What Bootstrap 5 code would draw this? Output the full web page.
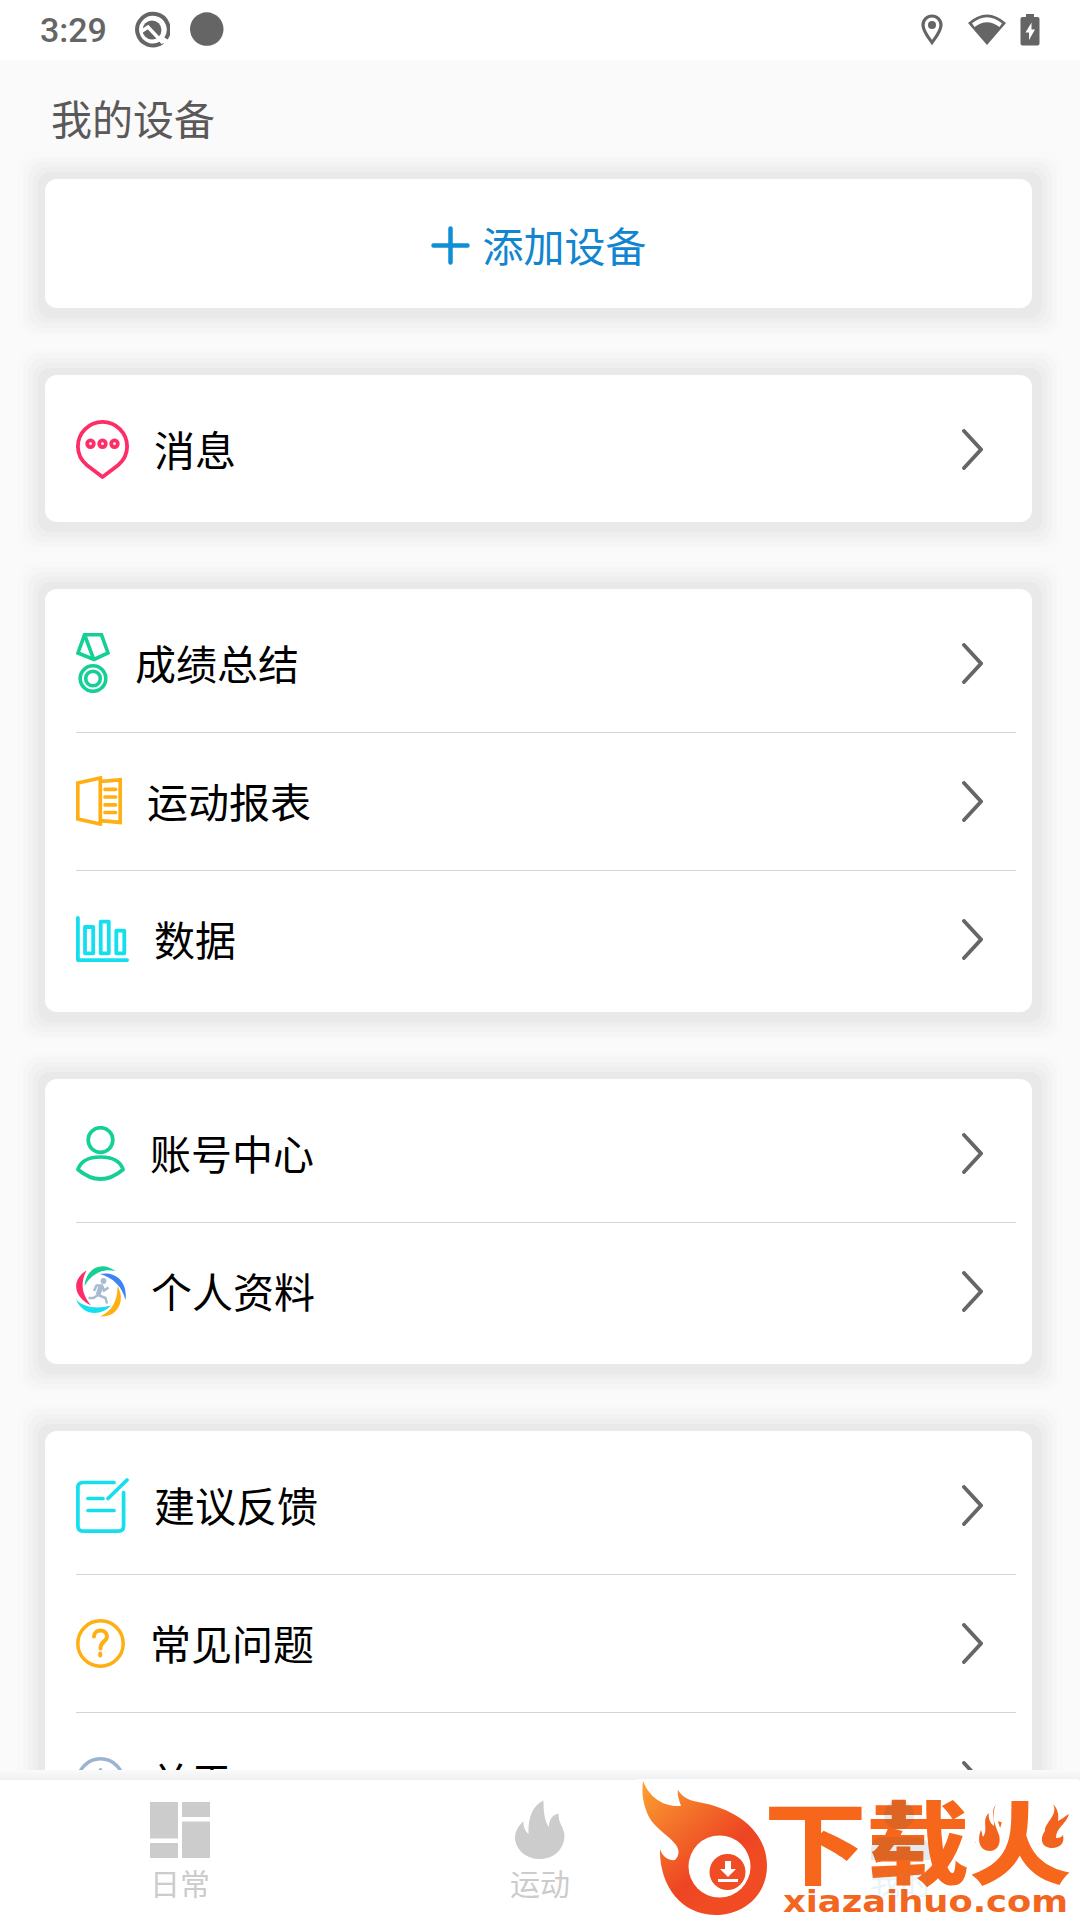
<!DOCTYPE html>
<html lang="zh-CN">
<head>
  <meta charset="UTF-8" />
  <meta name="viewport" content="width=device-width, initial-scale=1.0" />
  <title>我的</title>
  <link href="https://cdn.jsdelivr.net/npm/bootstrap@5.3.0/dist/css/bootstrap.min.css" rel="stylesheet" />
  <style>
    body {
      height: 1920px;
      overflow: hidden;
      background: #fafafa;
      font-family: "Noto Sans CJK SC", sans-serif;
      color: #000;
    }
    svg {
      display: block;
      flex: none;
      fill: none;
    }
    .status-bar {
      height: 60px;
      padding: 0 40px;
      color: #656565;
    }
    .status-bar .wifi {
      margin: 0 14px 0 25px;
    }
    .clock {
      font: 500 34px/60px Roboto, sans-serif;
      width: 94px;
    }
    .page-title {
      height: 119px;
      padding-left: 51px;
      font-size: 41px;
      line-height: 115px;
      color: #5a5858;
    }
    .scroll-area {
      height: 1710px;
      overflow: hidden;
      isolation: isolate;
    }
    .panel {
      position: relative;
      margin: 0 48px 67px 45px;
      padding: 6px 0 4px;
      border-radius: 12px;
      background: #fff;
    }
    /* stepped halo round each panel */
    .panel::before {
      content: "";
      position: absolute;
      inset: 0;
      z-index: -1;
      border-radius: 5px;
      background: #e9e9e9;
      box-shadow:
        1.5px 1.5px 0 8.5px #e9e9e9,
        1.5px 1.5px 0 13.5px #eee,
        1.5px 1.5px 0 18.5px #f2f2f2,
        1.5px 1.5px 0 23.5px #f6f6f6,
        1.5px 1.5px 0 28.5px #f9f9f9;
    }
    .add-device {
      height: 119px;
      gap: 13px;
      font-size: 41px;
      line-height: 60px;
      color: #1285d1;
    }
    .add-device svg {
      margin-top: 2px;
    }
    .add-device span {
      padding-bottom: 2px;
    }
    .menu-row {
      height: 137px;
      margin: 0 16px 0 31px;
      padding-right: 33px;
      font-size: 41px;
      line-height: 60px;
    }
    .menu-row + .menu-row {
      height: 138px;
      border-top: 1px solid #d4d4d4;
    }
    .menu-row span {
      margin-left: 25px;
      padding-bottom: 4px;
    }
    .lifted { margin-bottom: 2px; }
    .pink { stroke: #ff2d67; }
    .green { stroke: #14cf96; }
    .amber { stroke: #ffaf14; }
    .cyan { stroke: #15dfef; }
    .steel { stroke: #9db4d0; }
    .bar-shade {
      height: 10px;
      background: linear-gradient(#fafafa, #f0f0f0);
    }
    .tab-bar {
      height: 140px;
      background: #fff;
      color: #ccc;
      font-size: 30px;
      line-height: 36px;
    }
    .tab-item {
      width: 360px;
    }
    .tab-icon {
      height: 68px;
      margin: 11px 0 5px;
    }
    .brand-mark {
      right: 0;
      bottom: 0;
    }
    .brand-name {
      font: 900 88px "Noto Sans CJK SC", sans-serif;
      fill: #f6661b;
    }
    .brand-url {
      font: bold 31px "DejaVu Sans", sans-serif;
      fill: #f3661f;
    }
    .ghost-label {
      font: 30px "Noto Sans CJK SC", sans-serif;
      fill: #3fa0c8;
    }
  </style>
</head>
<body>
  <header class="status-bar bg-white d-flex align-items-center">
    <div class="clock">3:29</div>
    <svg width="36" height="38" viewBox="0 0 36 38">
      <path d="M28.500 31.200A15.800 15.800 0 1 1 32 27.500" stroke="#656565" stroke-width="4"/>
      <circle cx="18" cy="19" r="9.500" fill="#656565"/>
      <path d="M8 20L14 16L29 32" stroke="#fff" stroke-width="3.400"/>
    </svg>
    <svg class="ms-3 ps-1" width="42" height="40" viewBox="-1.500 0 42 40">
      <circle cx="17.500" cy="20" r="18" fill="#ddd"/>
      <circle cx="17" cy="19" r="18.500" fill="#656565"/>
    </svg>
    <svg class="ms-auto" width="22" height="32" viewBox="0 0 22 32">
      <path d="M11 2C6 2 2 6 2 11C2 17 7 23 11 28.500C15 23 20 17 20 11C20 6 16 2 11 2Z" stroke="#656565" stroke-width="3.200"/>
      <circle cx="11" cy="11" r="4" fill="#656565"/>
    </svg>
    <svg class="wifi" width="38" height="32" viewBox="0 0 38 32">
      <path d="M0 9Q19-8 38 9L19 31Z" fill="#656565"/>
      <path d="M4 9.300Q19-3 34 9.300L31.500 13Q19 3.500 6.500 13Z" fill="#fff"/>
    </svg>
    <svg width="20" height="32" viewBox="0 0 20 32">
      <path d="M6 0H14V3H17.500Q19.500 3 19.500 5V29.500Q19.500 31.500 17.500 31.500H2.500Q.5 31.500 .5 29.500V5Q.5 3 2.500 3H6Z" fill="#656565"/>
      <path d="M11.500 8.500V15.500H15L9 26V18.500H5.500Z" fill="#fff"/>
    </svg>
  </header>

  <main class="scroll-area">
    <h1 class="page-title fw-normal m-0">我的设备</h1>

    <section class="panel">
      <div class="add-device d-flex align-items-center justify-content-center">
        <svg width="39" height="39" viewBox="0 0 39 39" stroke="#0f8fd5" stroke-width="4.500" stroke-linecap="round"><path d="M2.500 19.500H36.500M19.500 2.500V36.500"/></svg>
        <span>添加设备</span>
      </div>
    </section>

    <section class="panel">
      <div class="menu-row d-flex align-items-center">
        <svg class="pink" width="53" height="59" viewBox="0 0 53 59" stroke-width="3.800" stroke-linejoin="round">
          <path d="M26.500 1.900A24.600 24.600 0 0 0 1.900 26.500C1.900 36 6 41 11 45.200L26.500 57L42 45.200C47 41 51.100 36 51.100 26.500A24.600 24.600 0 0 0 26.500 1.900Z"/>
          <circle cx="14.500" cy="23.700" r="3.300"/><circle cx="26.500" cy="23.700" r="3.300"/><circle cx="38.500" cy="23.700" r="3.300"/>
        </svg>
        <span>消息</span>
        <svg class="ms-auto" width="21" height="41" viewBox="0 0 21 41"><use href="#chevron"/></svg>
      </div>
    </section>

    <section class="panel">
      <div class="menu-row d-flex align-items-center">
        <svg class="green lifted" width="34" height="60" viewBox="0 0 34 60" stroke-width="3.600">
          <path d="M8.500 1.800H25.500L32 20L18 26.500L2 20ZM8.500 1.700L18 27"/>
          <circle cx="17" cy="45.500" r="12.800"/><circle cx="17" cy="45.500" r="7.300"/>
        </svg>
        <span>成绩总结</span>
        <svg class="ms-auto" width="21" height="41" viewBox="0 0 21 41"><use href="#chevron"/></svg>
      </div>
      <div class="menu-row d-flex align-items-center">
        <svg class="amber lifted" width="46" height="50" viewBox="0 0 46 50" stroke-width="3.700">
          <path d="M1.800 7L24.300 2V48L1.800 43ZM24.300 5.500L44.200 3.800V46.400L24.300 44.700"/>
          <path d="M29 13.300H39.500M29 21H39.500M29 28.800H39.500M29 36.500H39.500" stroke-linecap="round"/>
        </svg>
        <span>运动报表</span>
        <svg class="ms-auto" width="21" height="41" viewBox="0 0 21 41"><use href="#chevron"/></svg>
      </div>
      <div class="menu-row d-flex align-items-center">
        <svg class="cyan lifted" width="53" height="46" viewBox="0 0 53 46" stroke-width="3.800" stroke-linejoin="round" stroke-linecap="round">
          <path d="M1.900 1.900V44.100H51.100M9 11H17.200V37.300H9ZM24.700 5.700H32.800V37.300H24.700ZM40.300 14.700H48.300V37.300H40.300Z"/>
        </svg>
        <span>数据</span>
        <svg class="ms-auto" width="21" height="41" viewBox="0 0 21 41"><use href="#chevron"/></svg>
      </div>
    </section>

    <section class="panel">
      <div class="menu-row d-flex align-items-center">
        <svg class="green" width="49" height="55" viewBox="0 0 49 55" stroke-width="3.700" stroke-linejoin="round">
          <circle cx="24.500" cy="14" r="12.300"/>
          <path d="M1.900 43.500C5 34.500 14 31 24.500 31S44 34.500 47.100 43.500C32 56.200 17 56.200 1.900 43.500Z"/>
        </svg>
        <span>账号中心</span>
        <svg class="ms-auto" width="21" height="41" viewBox="0 0 21 41"><use href="#chevron"/></svg>
      </div>
      <div class="menu-row d-flex align-items-center">
        <svg width="50" height="51" viewBox="0 0 50 51">
          <path d="M8.500 20C10 3 25-6 39.500 5C28 2.500 17 6 8.500 20Z" fill="#14cf96"/>
          <path d="M24 8C38 5 52 14 49.500 34C46 21 38 12 24 8Z" fill="#3f82f7"/>
          <path d="M41.500 20C50 34 42 52 24 50.500C35.500 45 41.500 36 41.500 20Z" fill="#ffaf14"/>
          <path d="M0 33.500C7 41 20 43.500 35 39.500C25 50.500 7 50 0 33.500Z" fill="#15dfef"/>
          <path d="M10.500 4.500C-4 13-4 30 15 39.500C6.500 29 3.500 18 10.500 4.500Z" fill="#ff2d67"/>
          <circle cx="27.500" cy="15" r="2.900" fill="#a9bbd2"/>
          <path d="M25 20L22 29" stroke="#a9bbd2" stroke-width="5"/>
          <path d="M18 25L20.500 19.500H26L28 24.500L32.500 21.500M22 29L17.500 32H12.500M22 29L29.500 32L31 37.500" stroke="#a9bbd2" stroke-width="2.500"/>
        </svg>
        <span>个人资料</span>
        <svg class="ms-auto" width="21" height="41" viewBox="0 0 21 41"><use href="#chevron"/></svg>
      </div>
    </section>

    <section class="panel">
      <div class="menu-row d-flex align-items-center">
        <svg class="cyan" width="53" height="55" viewBox="0 0 53 55" stroke-width="3.700" stroke-linecap="round">
          <path d="M38 4.500H7Q1.900 4.500 1.900 9.500V48Q1.900 53.100 7 53.100H42.500Q47.600 53.100 47.600 48V14.500M12 20.500H27M12 32.500H38M32 20.500L51 2"/>
        </svg>
        <span>建议反馈</span>
        <svg class="ms-auto" width="21" height="41" viewBox="0 0 21 41"><use href="#chevron"/></svg>
      </div>
      <div class="menu-row d-flex align-items-center">
        <svg class="amber" width="49" height="49" viewBox="0 0 49 49" stroke-width="3.500">
          <circle cx="24.500" cy="24.500" r="22.700"/>
          <path d="M18 17.500C18 9.500 31 9.500 31 17.500C31 22.500 24.500 22 24.500 29.500M24.200 34.500V36.500" stroke-width="4" stroke-linecap="round"/>
        </svg>
        <span>常见问题</span>
        <svg class="ms-auto" width="21" height="41" viewBox="0 0 21 41"><use href="#chevron"/></svg>
      </div>
      <div class="menu-row d-flex align-items-center">
        <svg class="steel" width="49" height="49" viewBox="0 0 49 49" stroke-width="3.500">
          <circle cx="24.500" cy="24.500" r="22.700"/>
          <path d="M24.500 12.800V13.500M24.500 20V36" stroke-linecap="round"/>
        </svg>
        <span>关于</span>
        <svg class="ms-auto" width="21" height="41" viewBox="0 0 21 41"><use href="#chevron"/></svg>
      </div>
    </section>
  </main>

  <div class="bar-shade"></div>
  <nav class="tab-bar d-flex text-center position-relative">
    <div class="tab-item d-flex flex-column align-items-center">
      <div class="tab-icon">
        <svg width="60" height="68" viewBox="0 0 60 68"><path fill="#ccc" d="M0 11H28V47.500H0ZM0 52H28V67H0ZM32 11H60V26H32ZM32 30.500H60V67H32Z"/></svg>
      </div>
      日常
    </div>
    <div class="tab-item d-flex flex-column align-items-center">
      <div class="tab-icon">
        <svg width="50" height="68" viewBox="0 0 50 68"><path fill="#ccc" d="M28.500 9.500C17 15 13 27 13.500 43C10 40 8 35 8.500 30C3 35 0 41 0 47C1 60 12 68 25 68C38 68 49 59 49.500 45C49.500 37 43 32 43.500 22.500C37 24 34 29 34 36C29 30 28.500 19 28.500 9.500Z"/></svg>
      </div>
      运动
    </div>
    <div class="brand-mark position-absolute">
      <svg width="450" height="142" viewBox="630 1778 450 142">
        <defs>
          <linearGradient id="flame" x1="0" y1="0" x2=".65" y2=".8">
            <stop offset="0" stop-color="#fda12f"/>
            <stop offset=".4" stop-color="#f3722a"/>
            <stop offset=".8" stop-color="#ee4423"/>
            <stop offset="1" stop-color="#f04b23"/>
          </linearGradient>
        </defs>
        <path fill="#fff" d="M637 1779H1078V1918H637Z"/>
        <path fill="url(#flame)" d="M643 1781C650 1799 665 1807 681 1806C679 1800 677 1795 678 1790C683 1798 689 1800 698 1802C738 1809 767 1832 767 1866C767 1894 745 1915 715 1915C681 1915 659 1885 660 1849C662 1856 668 1861 675 1860C679 1856 680 1851 676 1845C667 1833 652 1828 646 1810C642 1799 642 1790 643 1781Z"/>
        <circle cx="719.500" cy="1866.500" r="31" fill="#fff"/>
        <circle cx="727.500" cy="1872" r="18" fill="#f04c25"/>
        <path fill="#fff" d="M725 1861H731V1869H736L728 1877L720 1869H725ZM718 1879H738V1882H718Z"/>
        <text class="brand-name" transform="translate(764 1877) scale(1.165 1.02)">下载火</text>
        <g fill="#f2641e" stroke="#fff" stroke-width="7" paint-order="stroke">
          <path d="M996 1804C990 1813 995 1818 994 1826C990 1823 988 1818 989 1813C981 1820 989 1829 983 1837C982 1835 982 1832 981 1830C977 1839 979 1851 990 1851C999 1851 1001 1841 999 1835C997 1828 990 1818 996 1804Z"/>
          <path d="M1053 1804C1059 1815 1044 1823 1045 1831C1039 1839 1042 1848 1052 1848C1060 1848 1065 1843 1063 1835C1061 1838 1058 1838 1056 1838C1056 1827 1066 1825 1069 1814C1064 1817 1062 1819 1058 1821C1059 1815 1058 1809 1053 1804Z"/>
        </g>
        <text class="brand-url" x="783" y="1912" textLength="285" lengthAdjust="spacingAndGlyphs">xiazaihuo.com</text>
        <!-- faded third tab -->
        <g opacity=".11">
          <circle cx="899" cy="1815" r="15" fill="#1d5566"/>
          <path d="M871 1860V1850Q871 1837 885 1837H913Q930 1837 930 1850V1860Z" fill="#1d5566"/>
          <text class="ghost-label" x="870" y="1894">我的</text>
        </g>
      </svg>
    </div>
  </nav>

  <!-- shared chevron -->
  <svg width="0" height="0">
    <symbol id="chevron" viewBox="0 0 21 41" width="21" height="41">
      <path d="M2 2L19 20.500L2 39" stroke="#666" stroke-width="3.800" stroke-linecap="round" fill="none"/>
    </symbol>
  </svg>
  <script src="https://cdn.jsdelivr.net/npm/bootstrap@5.3.0/dist/js/bootstrap.bundle.min.js"></script>
</body>
</html>
